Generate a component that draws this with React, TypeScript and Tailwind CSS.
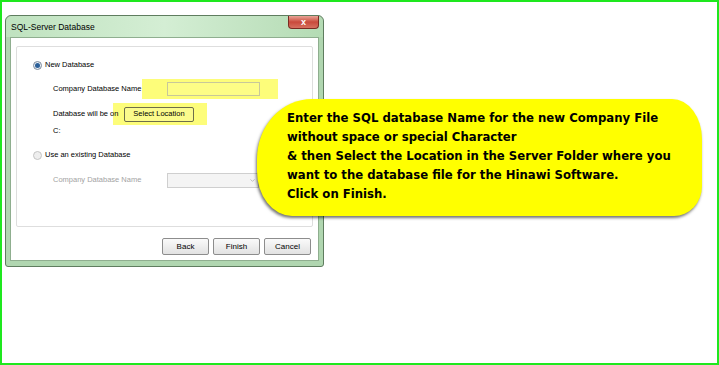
import { ChevronDown } from "lucide-react";

const dlgFont = { fontFamily: '"Liberation Sans", Arial, sans-serif' };

function Radio({ checked, disabled }: { checked?: boolean; disabled?: boolean }) {
	return (
		<span
			className={`w-[9px] h-[9px] rounded-full border flex items-center justify-center shrink-0 ${
				disabled ? "border-[#c4c4c4] bg-[#eeeeee]" : "border-[#7d8a9a] bg-[#e8eef5]"
			}`}
		>
			{checked && <span className="w-[5px] h-[5px] rounded-full bg-[#2b5f98]" />}
		</span>
	);
}

function DlgButton({ label }: { label: string }) {
	return (
		<div className="w-[47px] h-[17px] border border-[#8d8d8d] rounded-[2px] bg-gradient-to-b from-[#fafafa] to-[#e2e2e2] flex items-center justify-center text-[8px] text-black">
			{label}
		</div>
	);
}

function Dialog() {
	return (
		<div
			className="w-[319px] h-[252px] ml-[3px] mt-[13px] rounded-t-[6px] rounded-b-[3px] border border-[#5f7d5f] bg-[#b0d6b0] flex flex-col"
			style={dlgFont}
		>
			{/* title bar */}
			<div className="h-[21px] flex items-start rounded-t-[6px] bg-gradient-to-r from-[#bfe2bf] via-[#d4eed4] to-[#b4dbb4]">
				<span className="pl-[5px] pt-[5px] text-[8.5px] text-black whitespace-nowrap">SQL-Server Database</span>
				<div className="ml-auto mr-[4px] w-[31px] h-[13px] rounded-b-[4px] border border-t-0 border-[#7a2a22] bg-gradient-to-b from-[#e8a497] via-[#c9493b] to-[#d6705f] flex items-center justify-center">
					<span className="text-white text-[9px] font-bold leading-none">x</span>
				</div>
			</div>

			{/* client area */}
			<div className="flex-1 mx-[4px] mb-[5px] bg-white border border-[#8fae8f] flex flex-col">
				<div className="mx-[5px] mt-[8px] h-[181px] border border-[#dedede] rounded-[2px] flex flex-col text-[7.5px] whitespace-nowrap">
					<div className="mt-[10px] h-[16px] flex items-center gap-[3px] pl-[16px] text-black">
						<Radio checked />
						<span>New Database</span>
					</div>

					<div className="mt-[6px] h-[20px] flex items-center pl-[36px] text-black">
						<span className="w-[89px] shrink-0">Company Database Name</span>
						<div className="w-[136px] h-[20px] bg-[#fdfd7a] flex items-center pl-[25px]">
							<div className="w-[93px] h-[14px] border border-[#c8c89a] bg-[#fdfd86]" />
						</div>
					</div>

					<div className="mt-[4px] h-[22px] flex items-center pl-[36px] text-black">
						<span className="relative z-10 w-[60px] shrink-0">Database will be on</span>
						<div className="w-[94px] h-[22px] bg-[#fdfd7a] flex items-center pl-[11px]">
							<div className="w-[70px] h-[15px] border border-[#6e6e4a] rounded-[2px] bg-[#fbfb8c] flex items-center justify-center">
								Select Location
							</div>
						</div>
					</div>

					<div className="h-[12px] flex items-center pl-[36px] text-black">C:</div>

					<div className="mt-[10px] h-[16px] flex items-center gap-[3px] pl-[16px] text-black">
						<Radio disabled />
						<span>Use an existing Database</span>
					</div>

					<div className="mt-[9px] h-[16px] flex items-center pl-[36px] text-[#a3a3a3]">
						<span className="w-[114px] shrink-0">Company Database Name</span>
						<div className="w-[92px] h-[15px] border border-[#cfcfcf] bg-[#f4f4f4] flex items-center justify-end pr-[2px]">
							<ChevronDown size={7} className="text-[#9a9a9a]" />
						</div>
					</div>
				</div>

				<div className="mt-[11px] flex justify-end gap-[4px] pr-[7px]">
					<DlgButton label="Back" />
					<DlgButton label="Finish" />
					<DlgButton label="Cancel" />
				</div>
			</div>
		</div>
	);
}

function Callout() {
	return (
		<div
			className="absolute left-[255px] top-[97px] w-[445px] h-[117px] bg-[#ffff00] rounded-[55px_30px_28px_35px/60px_40px_30px_45px] shadow-[-1px_2px_3px_rgba(0,0,0,0.55)] pl-[30px] pt-[10px] text-[11.7px] font-bold leading-[19px] text-black whitespace-nowrap"
			style={{ fontFamily: '"DejaVu Sans", sans-serif' }}
		>
			<p>Enter the SQL database Name for the new Company File</p>
			<p>without space or special Character</p>
			<p>&amp; then Select the Location in the Server Folder where you</p>
			<p>want to the database file for the Hinawi Software.</p>
			<p>Click on Finish.</p>
		</div>
	);
}

export default function App() {
	return (
		<div className="relative w-[719px] h-[365px] bg-white border-2 border-[#1ee81e] overflow-hidden">
			<Dialog />
			<Callout />
		</div>
	);
}
